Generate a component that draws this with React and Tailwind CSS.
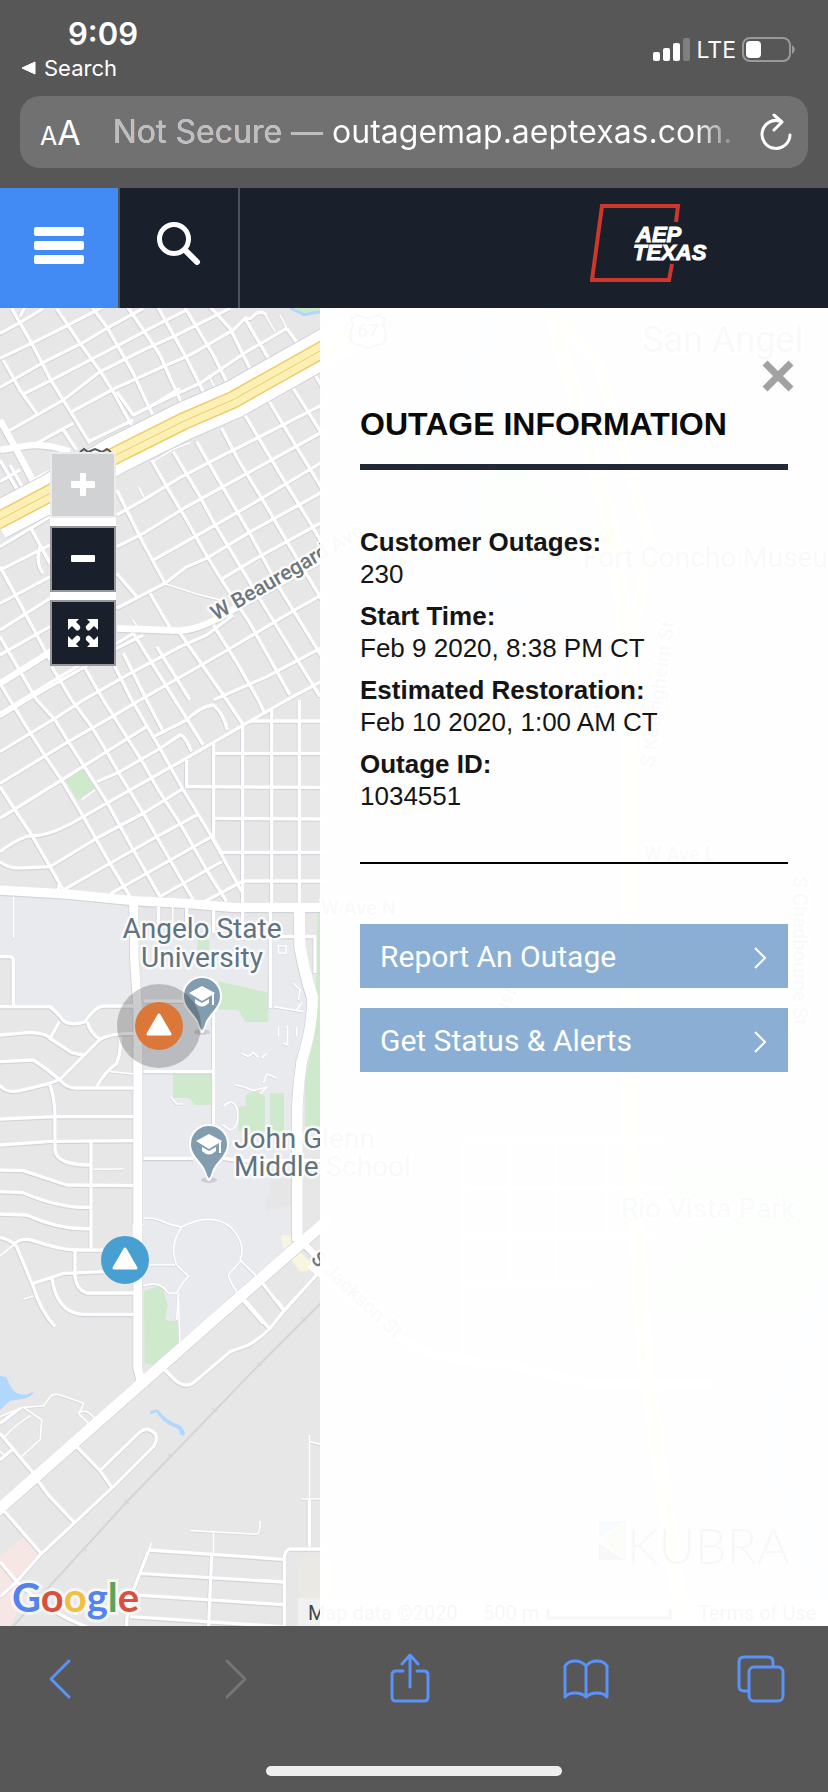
import { useState } from "react";

// Map geometry is kept at three units per pixel. Every district is shifted
// down by its own `y`, so that its paths can start near zero.
const districts = [
  {
    // Downtown grid, both sides of the highway
    y: -24,
    thin: [
      "M840 45L862 90M790 35L825 95M625 225L645 265M415 560L432 592",
      "M490 850L590 882L680 905M398 960L415 985M460 485L515 450L570 428",
    ],
    minor: [
      // Northwest of the highway
      "M35 25L95 130L155 245L215 340L270 430",
      "M75 20L60 50M170 25L240 130L300 212L345 285L400 385",
      "M275 20L320 80L400 220L460 350",
      "M375 10L430 90L480 165L545 310",
      "M470 15L560 175L615 285",
      "M550 15L640 165L680 245",
      "M625 15L690 85L755 215",
      "M735 55L820 200M860 85L900 140M735 55H752Q780 25 800 45",
      "M0 100L65 65L130 25M0 175L95 130L205 75L310 20",
      "M0 262L125 190L245 130L320 85L430 25",
      "M65 285L155 240L270 180L375 125L480 70L560 30",
      "M28 392L190 300L300 215L430 150L530 105L690 25",
      "M215 335L345 265L400 240L500 195L570 165L700 90L740 50",
      "M350 275L400 345L490 300L600 250L740 155L860 85",
      "M265 425L400 360M450 320L540 265",
      "M10 180L60 270L110 340M190 390L230 450M110 430L220 370",
      "M0 480L55 575M30 495L75 575M0 545L60 510",
      // Southeast of the highway
      "M350 570L430 730L495 850M350 820L410 890",
      "M455 480L500 560L560 660L610 750L665 840L750 970L870 1185",
      "M520 455L600 590L640 665L715 790L800 930L960 1190",
      "M590 425L650 530L755 710L830 850L990 1110",
      "M665 385L715 480L800 620L870 740L960 890L990 940",
      "M735 345L845 530L925 660L990 770",
      "M805 300L880 425L990 605M880 265L990 440M945 225L990 300",
      "M350 645L430 600L545 530L660 470L760 420L960 318L990 300",
      "M350 740L430 700L560 620L760 510L960 400L990 385",
      "M460 780L620 690L760 610L960 490L990 475",
      "M350 925L495 850L560 800L620 775L760 690L960 580L990 560",
      "M660 840L760 780L960 670L990 655",
      // South of Beauregard
      "M450 880L520 1000M400 1000L525 1200M470 1040L570 1200M540 1000L680 1200M640 975L712 1090L775 1200",
      "M80 1200L350 1045L430 1005M250 1200L400 1115L540 1040L620 1005L700 945",
      "M420 1200L560 1120L700 1040L850 950L990 870M640 1200L800 1130L990 1030M860 1200L990 1130",
      "M0 1150L30 1200M0 1010L110 1200M155 1100L215 1200M250 1095L310 1200M335 1080L395 1200M370 1060L440 1200",
      // West edge
      "M90 680L150 790M0 740L150 650M0 810L150 735M0 910L150 830",
      "M0 990L150 895M0 1065L150 980M0 800L60 910L150 1080M120 740Q105 790 130 820",
      "M0 1240L180 1130L350 1030L400 1000",
    ],
    major: [
      "M0 360L50 450L100 545M0 450L60 440Q130 425 210 455M100 545L150 518",
      "M350 985L540 992Q590 988 640 962L990 765M0 1150L160 1050",
    ],
  },
  {
    // Diagonal blocks that meet the square ones
    y: 1176,
    thin: [
      "M40 590L40 715M518 620L518 700M245 300L285 270M835 735L835 760L858 760L858 738L835 738M880 850L900 870L895 900",
    ],
    minor: [
      "M0 260L45 330L95 405L150 500L190 570M172 575L180 545",
      "M30 0L92 100L140 175L185 240L250 350L330 490L390 590",
      "M110 0L165 60L205 125L250 195L320 305L400 450L480 590",
      "M215 0L275 80L320 155L360 225L430 340L510 480L580 600",
      "M310 0L345 55L430 190L475 270L540 370L620 510L680 605",
      "M395 0L480 145L550 270L635 410L725 575",
      "M440 0L490 95M525 0L610 135M680 0L730 75M775 0L792 35",
      "M0 50L80 0M0 155L165 55L250 0M0 250L205 125L345 45L420 0",
      "M0 355L185 240L320 155L440 80M290 245L360 215L480 145L540 105Q550 100 575 155",
      "M0 455Q60 410 95 407Q150 410 250 350L390 270L550 180L730 75L860 0",
      "M0 485C30 510 60 505 150 500L290 415L430 340L550 265",
      "M190 570L330 490L470 410L590 345M330 582L440 520L635 410",
      "M480 590L665 485M610 607L725 545M460 110L560 60Q600 20 640 15Q670 40 682 90",
      "M560 180V265M641 130V420L665 457M728 75V610M815 30V610M898 0V610",
      "M750 63H990M641 160H990M560 260L990 262M641 355L990 357M665 457H990M725 543H990",
      "M0 770H30Q40 770 40 785V900M475 620V670M560 620V670M641 630V700M728 630V720M811 630V900M728 710H945V820",
    ],
    major: [],
  },
  {
    // Campus and the streets around it
    y: 2076,
    thin: [
      "M430 655Q460 650 500 670L545 682Q630 635 690 680Q740 730 720 780L770 830M545 682Q505 740 530 795L565 830Q545 850 530 880L505 880Q480 840 430 858",
      "M430 795H525M725 780L685 825Q690 850 720 890M280 508L370 507M330 215L400 222M70 898L100 888M0 768L40 735M535 880L530 960M400 710V675H430",
      "M725 160L745 170L760 158L775 172M785 175L800 160M835 82V110M862 78V135L850 130M890 82V110M820 20L910 35M905 8L890 30",
      "M705 255Q735 260 760 272L800 262L780 282M790 250L800 222L830 235M512 290L530 312H548M670 320Q700 290 712 330Q720 380 690 390L668 375",
    ],
    minor: [
      "M0 20H150Q175 40 190 62Q215 80 255 65Q285 20 310 18H400M40 0V20",
      "M0 105L90 97Q140 100 150 115L215 158L250 165M150 115L178 65M262 65Q270 100 300 118",
      "M0 185L100 180Q140 205 180 240Q200 265 230 264H400",
      "M0 255Q15 280 60 272L150 250L180 238L300 118Q330 100 400 100M290 260Q310 220 350 190Q365 150 360 110",
      "M150 255Q165 300 165 350V450Q170 495 270 495M0 357L165 350H400",
      "M0 435L150 424L400 422M273 425V745M0 510L70 512L200 555L400 557M0 575L70 578Q180 625 270 622M0 642L80 645Q180 690 270 686",
      "M0 712Q35 720 50 740L100 860Q120 930 165 980M40 735Q60 710 100 722Q180 750 230 750H310",
      "M100 850L190 820L310 815M225 750V830Q230 870 260 879H405M155 830Q170 940 250 943H405",
      "M430 215H641M641 0V375M430 475H580M670 475L720 482H990M811 0V25M780 840L850 930M720 890L790 970M990 780L850 935",
      "M430 3H560",
    ],
    major: ["M900 720L990 810"],
  },
  {
    // Rail yard and the southern subdivision
    y: 2976,
    thin: [
      "M535 0L540 130M0 350L70 322L130 318L150 290Q160 280 180 285L250 310Q245 330 235 340L265 370M235 340Q260 320 290 365",
      "M70 322L125 360L120 420L65 470M15 410Q40 380 92 347M570 692L770 703Q780 700 780 663M640 700V765M455 728L445 755M928 405V740M928 425L990 440M905 597H990M0 455L12 465",
    ],
    minor: [
      "M490 205L525 240Q560 270 590 240L690 155L745 135Q780 115 810 85L850 35L890 -10M735 0L805 82M830 0L855 32M0 400L105 525M0 480L35 450",
      "M0 370L60 325M112 540L145 585L225 670M230 440L300 512L335 562M300 512L415 400Q440 375 465 400Q475 420 460 440L340 560L120 765L50 845L0 890",
      "M10 630L125 762M0 785L50 845L120 905Q180 950 270 985M445 755L400 870Q380 920 378 1000M445 750L850 778M420 820L850 846",
      "M410 885L850 914M390 950L850 980M635 765L625 1000M928 600V740M990 747H870Q850 750 853 790V1000",
    ],
    major: [],
  },
];

const arterials = [
  { width: 28, d: "M-10 1746L200 1758L400 1778L560 1786L700 1798L990 1798" },
  { width: 26, d: "M400 1780Q403 1850 403 1950L413 2100V3180L428 3240" },
  { width: 34, d: "M898 1800L900 1916Q915 2000 940 2076" },
  { width: 32, d: "M938 2066Q938 2160 905 2260Q895 2330 892 2400V2800" },
  { width: 34, d: "M990 2730L640 3036L0 3601L-20 3620" },
];

const widths = { thin: 5, minor: 10, major: 20 };

const roads = [
  ...arterials.map((road) => ({ ...road, y: 0 })),
  ...districts.flatMap(({ y, ...classes }) =>
    Object.entries(classes).flatMap(([kind, paths]) =>
      paths.map((d) => ({ d, y, width: widths[kind] }))
    )
  ),
];

const highway =
  "M-10 648L150 564L348 449L400 423L550 348L700 283L990 120L1100 50";

const details = [
  { label: "Customer Outages:", value: "230" },
  { label: "Start Time:", value: "Feb 9 2020, 8:38 PM CT" },
  { label: "Estimated Restoration:", value: "Feb 10 2020, 1:00 AM CT" },
  { label: "Outage ID:", value: "1034551" },
];

function SchoolPin({ x, y }) {
  return (
    <g transform={`translate(${x} ${y})`}>
      <ellipse cx="0" cy="36" rx="8" ry="3" fill="#000" opacity="0.12" />
      <path
        d="M0 37C-2 37-3 34-4 30C-7 20-20 14-20 0A20 20 0 0 1 20 0C20 14 7 20 4 30C3 34 2 37 0 37Z"
        fill="#fff"
      />
      <path
        d="M0 34C-1 34-2 31-3 28C-6 18-18 12-18 0A18 18 0 0 1 18 0C18 12 6 18 3 28C2 31 1 34 0 34Z"
        fill="#839db0"
      />
      <path
        d="M0-10L13-3L12-2V9H10V-1L0 5L-13-3ZM-7 3L0 7L7 3V7Q0 14-7 7Z"
        fill="#fff"
      />
    </g>
  );
}

function OutageMarker({ x, y, fill }) {
  return (
    <g transform={`translate(${x} ${y})`}>
      <circle r="24" fill={fill} />
      <path
        d="M0-11L11 8H-11Z"
        fill="#fff"
        stroke="#fff"
        strokeWidth="3"
        strokeLinejoin="round"
      />
    </g>
  );
}

function OutageMap() {
  return (
    <svg
      className="absolute inset-0 size-full bg-[#e7e7e7]"
      viewBox="0 0 828 1318"
      preserveAspectRatio="xMinYMin slice"
      role="img"
      aria-label="Outage map"
    >
      <g transform="scale(0.33333)">
        {/* Land use */}
        <g fill="#e9eaee">
          <path d="M0 1766L385 1786L400 1800V2076L290 2095L262 2140Q220 2160 180 2140L150 2094H40V1940H0Z" />
          <path d="M425 1890H720V1888H890L945 2076Q930 2200 890 2330V2790L540 3110L495 3035L430 2935Z" />
        </g>
        <path d="M425 1796H720V1885H425Z" fill="#e6e6e9" />
        <path d="M810 2600L890 2610V2690L798 2708V2670L810 2665Z" fill="#e6e6e6" />
        <g fill="#cfe9cc">
          <path d="M195 1416L248 1382L288 1440L232 1476Z" />
          <path d="M592 1894H628V1926H592ZM655 2020L805 2054V2142H735L715 2105H655Z" />
          <path d="M519 2298H636V2391H585L568 2370H519ZM715 2395H737V2362Q765 2340 795 2365V2470H715ZM809 2356H852V2475H809Z" />
          <path d="M953 1816H990V2456H915V2310L945 2180ZM432 2950Q470 2930 487 2940L503 2990L497 3037L535 3040V3108L460 3172L434 3165Z" />
          <path d="M880 0H990V14L915 18Z" />
        </g>
        <path
          d="M870 0L912 20L990 6"
          fill="none"
          stroke="#b0d8ff"
          strokeWidth="9"
        />
        <g fill="#b0d8ff">
          <path d="M0 3203L20 3208Q35 3255 60 3258L80 3260L102 3250Q95 3270 60 3274L30 3278L0 3306Z" />
          <path d="M450 3312Q470 3298 478 3310Q500 3340 540 3352Q560 3370 552 3384L541 3380Q540 3362 520 3356Q490 3345 468 3312L452 3320Z" />
        </g>
        <path
          d="M0 3745L70 3688L115 3740L45 3820L75 3870L30 3954H0Z"
          fill="#f7e7e4"
        />
        <path d="M843 2782H870L880 2800L850 2822ZM868 2850L900 2830L940 2872L920 2890H900Z" fill="#faf5df" />
        <path d="M898 3750H990V3870H893Z" fill="#ebe9e4" />

        {/* Railway */}
        <path
          d="M990 2958L780 3168L380 3582L40 3954"
          fill="none"
          stroke="#d3d5d8"
          strokeWidth="6"
        />
        <path
          d="M904 3028L918 3040M771 3164L785 3174M636 3302L650 3312M504 3438L518 3448M374 3576L388 3588M248 3720L262 3730"
          stroke="#d3d5d8"
          strokeWidth="4"
        />

        {/* Streets: all the edges first, so that crossings stay open */}
        <g fill="none" stroke="#d2d3da" strokeLinejoin="round">
          {roads.map((road, i) => (
            <path
              key={i}
              d={road.d}
              transform={`translate(-1 ${road.y + 2})`}
              strokeWidth={road.width + (road.width > 5 ? 3 : 0)}
            />
          ))}
        </g>
        <g fill="none" stroke="#fff" strokeLinejoin="round">
          {roads.map((road, i) => (
            <path
              key={i}
              d={road.d}
              transform={`translate(0 ${road.y})`}
              strokeWidth={road.width}
            />
          ))}
        </g>

        {/* Highway */}
        <g fill="none" strokeLinejoin="round" transform="translate(0 -8)">
          <path d={highway} stroke="#d2d3da" strokeWidth="118" />
          <path d={highway} stroke="#fff" strokeWidth="112" />
          <path d={highway} stroke="#efcb6c" strokeWidth="54" />
          <path d={highway} stroke="#fcf0b5" strokeWidth="45" />
          <path d={highway} stroke="#efcb6c" strokeWidth="3" />
        </g>

        {/* Far side of town, mostly under the panel */}
        <g fill="none">
          <path d="M1470 0Q1390 300 1405 600T1600 880" stroke="#b0d8ff" strokeWidth="40" />
          <path d="M1650 0L1830 640L1890 1050V2500L1940 3200L2050 3954" stroke="#fcf0b5" strokeWidth="44" />
          <path d="M1660 20L1790 150L1950 700L1890 1050" stroke="#fcf0b5" strokeWidth="30" />
          <path d="M2484 2900L2300 3400L2484 3870" stroke="#b0d8ff" strokeWidth="40" />
          <path d="M930 2870L1200 3090Q1300 3160 1500 3165L1780 3230H2140" stroke="#fff" strokeWidth="24" />
          <path d="M1390 2500H2000M1390 2640H2000M1390 2780H1980M1390 2930H1790M1390 2500V3140M1530 2500V2930M1670 2500V2930M1820 2500V2800" stroke="#fff" strokeWidth="10" />
        </g>
        <path d="M2000 2600H2484V2900L2370 3010H1980V2900L2180 2760V2650H2000Z" fill="#cfe9cc" />
        <path d="M1440 500L1570 440L1700 640L1560 780L1440 720ZM1180 440L1330 420L1300 520Z" fill="#cfe9cc" />
      </g>

      {/* Highway shields, the first one mostly behind the zoom buttons */}
      <path
        d="M80 144L84 141L88 144L95 141L102 144L107 141L111 144"
        fill="none"
        stroke="#555"
        strokeWidth="2"
      />
      <g transform="translate(368 22)">
        <path
          d="M-17-11L-11-15L0-11L11-15L17-11L15-5Q21 8 14 14Q6 15 0 18Q-6 15-14 14Q-21 8-15-5Z"
          fill="#fff"
          stroke="#555"
          strokeWidth="2"
        />
        <text y="7" textAnchor="middle" className="font-['Roboto'] text-[19px]" fill="#333">
          67
        </text>
      </g>

      <SchoolPin x={202} y={688} />
      <SchoolPin x={209} y={836} />

      {/* Place names */}
      <g
        className="font-['Roboto',sans-serif]"
        fill="#5f7380"
        stroke="#fff"
        strokeOpacity="0.8"
        strokeWidth="5"
        strokeLinejoin="round"
        paintOrder="stroke"
      >
        <g className="text-[28px]">
          <text x="202" y="630" textAnchor="middle">Angelo State</text>
          <text x="202" y="659" textAnchor="middle">University</text>
          <text x="234" y="840">John Glenn</text>
          <text x="234" y="868">Middle School</text>
          <text x="583" y="259">Fort Concho Museu</text>
          <text x="621" y="910" fill="#4a9070">Rio Vista Park</text>
        </g>
        <text x="642" y="44" className="text-[36px]">San Angel</text>
        <g className="text-[20px] font-medium" fill="#6b767e">
          <text transform="translate(216 313) rotate(-30)" className="text-[21px]">
            W Beauregard Ave
          </text>
          <text x="644" y="553">W Ave L</text>
          <text x="321" y="607">W Ave N</text>
          <text transform="translate(654 460) rotate(-82)">S Koenigheim St</text>
          <text transform="translate(793 568) rotate(90)">S Chadbourne St</text>
          <text transform="translate(500 720) rotate(-65)">Austin St</text>
          <text transform="translate(310 952) rotate(43)">S Jackson St</text>
        </g>
      </g>

      <circle cx="159" cy="718" r="42" fill="#000" opacity="0.2" />
      <OutageMarker x={159} y={718} fill="#db7839" />
      <OutageMarker x={125} y={952} fill="#489fd2" />

      {/* Credits */}
      <path d="M599 1213H626L599 1230Z" fill="#3ba0e0" />
      <path d="M626 1214V1251L600 1232Z" fill="#c4c858" />
      <path d="M599 1235L624 1252H599Z" fill="#555" />
      <text x="627" y="1256" className="font-['Lato',sans-serif] text-[50px] font-light" fill="#444">
        KUBRA
      </text>
      <rect x="298" y="1290" width="530" height="28" fill="#f5f5f5" opacity="0.7" />
      <g className="font-['Roboto',sans-serif] text-[20px]" fill="#444">
        <text x="308" y="1312">Map data ©2020</text>
        <text x="483" y="1312">500 m</text>
        <text x="698" y="1312">Terms of Use</text>
      </g>
      <path d="M548 1301V1310H670V1301" fill="none" stroke="#444" strokeWidth="3" />
      <text
        x="12"
        y="1304"
        className="font-['Lato',sans-serif] text-[40px] font-bold"
        stroke="#fff"
        strokeOpacity="0.6"
        strokeWidth="6"
        paintOrder="stroke"
      >
        <tspan fill="#5383ec">G</tspan>
        <tspan fill="#d85140">o</tspan>
        <tspan fill="#f1bf42">o</tspan>
        <tspan fill="#5383ec">g</tspan>
        <tspan fill="#58a55c">l</tspan>
        <tspan fill="#d85140">e</tspan>
      </text>
    </svg>
  );
}

function BrowserTop() {
  return (
    <div className="bg-[#575757] px-5 pb-5 font-['Inter',sans-serif] text-white">
      <div className="flex h-24 items-start justify-between">
        <div className="pt-4">
          <div className="pl-12 text-[31px] leading-9 font-semibold">9:09</div>
          <a href="#search" className="flex items-center gap-2 text-[22px] leading-8">
            <svg width="16" height="14" viewBox="0 0 16 14" aria-hidden="true">
              <path d="M15 1V13L2 7Z" fill="#fff" stroke="#fff" strokeWidth="1" strokeLinejoin="round" />
            </svg>
            Search
          </a>
        </div>
        <div className="flex items-center gap-[6px] pt-8 pr-3">
          <svg width="38" height="24" viewBox="0 0 38 24" aria-hidden="true">
            <rect x="0" y="14" width="7" height="9" rx="2" fill="#fff" />
            <rect x="10" y="10" width="7" height="13" rx="2" fill="#fff" />
            <rect x="20" y="5" width="7" height="18" rx="2" fill="#fff" />
            <rect x="30" y="0" width="7" height="23" rx="2" fill="#7f7f7f" />
          </svg>
          <span className="text-[23px] leading-9">LTE</span>
          <svg width="54" height="26" viewBox="0 0 54 26" aria-hidden="true">
            <rect x="1" y="1" width="47" height="23" rx="7" fill="none" stroke="#999" strokeWidth="2" />
            <rect x="4" y="4" width="15" height="17" rx="4" fill="#fff" />
            <path d="M50 8Q53 10 53 12.500T50 17Z" fill="#999" />
          </svg>
        </div>
      </div>
      <div className="flex h-18 items-center rounded-[20px] bg-[#717171] pr-4 pl-5">
        <button aria-label="Page settings" className="flex items-baseline">
          <span className="text-[25px]">A</span>
          <span className="text-[34px]">A</span>
        </button>
        <div className="ml-8 min-w-0 flex-1 overflow-hidden bg-linear-to-r from-white from-93% to-[#717171] bg-clip-text text-[32px] leading-10 whitespace-nowrap text-transparent">
          <span className="text-[#bdbdbd]">Not Secure — </span>
          outagemap.aeptexas.com.
        </div>
        <button aria-label="Reload" className="ml-5">
          <svg width="32" height="38" viewBox="0 0 32 38" fill="none" stroke="#fff" strokeWidth="3" strokeLinecap="round" strokeLinejoin="round">
            <path d="M20 8A14 14 0 1 0 30 22M14 2L22 9L14 17" />
          </svg>
        </button>
      </div>
    </div>
  );
}

function SiteHeader() {
  return (
    <header className="flex h-30 bg-[#19202c]">
      <button
        aria-label="Menu"
        className="flex w-30 items-center justify-center border-r-2 border-[#4d5158] bg-[#428bf5] pb-1"
      >
        <svg width="50" height="38" viewBox="0 0 50 38" fill="#fff" aria-hidden="true">
          <rect width="50" height="9" rx="2" />
          <rect y="14" width="50" height="9" rx="2" />
          <rect y="28" width="50" height="9" rx="2" />
        </svg>
      </button>
      <button
        aria-label="Search"
        className="flex w-30 items-center justify-center border-r-2 border-[#4d5158] pb-2"
      >
        <svg width="46" height="44" viewBox="0 0 46 44" fill="none" stroke="#fff" aria-hidden="true">
          <circle cx="18" cy="17" r="14.500" strokeWidth="5" />
          <path d="M29 28L41 40" strokeWidth="6" strokeLinecap="round" />
        </svg>
      </button>
      <a href="#home" aria-label="AEP Texas" className="mt-4 mr-29 ml-auto">
        <svg width="122" height="80" viewBox="0 0 122 80">
          <path
            d="M86 18L88 2H12L2 76H79L82 60"
            fill="none"
            stroke="#d0372c"
            strokeWidth="4"
          />
          <g
            className="font-['Liberation_Sans',sans-serif] text-[22px] font-bold italic"
            fill="#fff"
            stroke="#fff"
            strokeWidth="1"
          >
            <text x="46" y="38">AEP</text>
            <text x="43" y="56">TEXAS</text>
          </g>
        </svg>
      </a>
    </header>
  );
}

function MapControls() {
  const dark = "border-[#97989b] bg-[#19202c]";
  const light = "border-[#ececec] bg-[#d1d2d3]";
  const base = "flex size-[66px] items-center justify-center border-2";

  return (
    <div className="absolute top-36 left-[50px] flex flex-col gap-2 bg-white">
      <button disabled aria-label="Zoom in" className={`${base} ${light}`}>
        <svg width="24" height="24" viewBox="0 0 24 24" fill="#fff">
          <rect x="9" y="0" width="6" height="23" rx="1" />
          <rect x="0" y="8" width="24" height="7" rx="1" />
        </svg>
      </button>
      <button aria-label="Zoom out" className={`${base} ${dark}`}>
        <svg width="24" height="24" viewBox="0 0 24 24" fill="#fff">
          <rect x="0" y="8" width="24" height="7" rx="1" />
        </svg>
      </button>
      <button aria-label="Full screen" className={`${base} ${dark}`}>
        <svg width="30" height="30" viewBox="0 0 30 30" fill="#fff">
          <path d="M0 1H11L8 4L12 8Q13 10 11 12Q9 13 8 12L4 8L0 12Z" />
          <path d="M30 1H19L22 4L18 8Q17 10 19 12Q21 13 22 12L26 8L30 12Z" />
          <path d="M0 29H11L8 26L12 22Q13 20 11 18Q9 17 8 18L4 22L0 18Z" />
          <path d="M30 29H19L22 26L18 22Q17 20 19 18Q21 17 22 18L26 22L30 18Z" />
        </svg>
      </button>
    </div>
  );
}

function PanelLink({ href, children }) {
  return (
    <a
      href={href}
      className="flex h-16 items-center justify-between bg-[#6493c6]/75 px-5 font-['Roboto',sans-serif] text-[30px] text-white"
    >
      {children}
      <svg width="15" height="26" viewBox="0 0 15 26" fill="none" stroke="#fff" strokeWidth="2" aria-hidden="true">
        <path d="M2 5L12 15L2 25" />
      </svg>
    </a>
  );
}

function OutagePanel({ onClose }) {
  return (
    <section className="absolute inset-y-0 right-0 left-[320px] bg-white/96 px-10 pt-12 font-['Liberation_Sans',Arial,sans-serif] text-[#151515]">
      <div className="flex justify-end">
        <button onClick={onClose} aria-label="Close" className="-mr-[10px] p-1">
          <svg width="32" height="32" viewBox="0 0 32 32" stroke="#a2a2a2" strokeWidth="7">
            <path d="M3 3L29 29M29 3L3 29" />
          </svg>
        </button>
      </div>
      <h1 className="mt-2 border-b-6 border-[#222936] pb-5 text-[32px] leading-10 font-bold text-[#0a0a0a]">
        OUTAGE INFORMATION
      </h1>
      <dl className="mt-14 flex flex-col gap-[10px] border-b-2 border-black pb-[50px] text-[26px] leading-8">
        {details.map(({ label, value }) => (
          <div key={label}>
            <dt className="font-bold">{label}</dt>
            <dd>{value}</dd>
          </div>
        ))}
      </dl>
      <nav className="mt-15 flex flex-col gap-5">
        <PanelLink href="#report">Report An Outage</PanelLink>
        <PanelLink href="#alerts">Get Status &amp; Alerts</PanelLink>
      </nav>
    </section>
  );
}

function ToolbarButton({ label, disabled, children }) {
  return (
    <button
      aria-label={label}
      disabled={disabled}
      className="flex size-15 items-center justify-center text-[#5b92f7] disabled:text-[#757575]"
    >
      <svg
        width="50"
        height="50"
        viewBox="0 0 50 50"
        fill="none"
        stroke="currentColor"
        strokeWidth="3"
        strokeLinecap="round"
        strokeLinejoin="round"
      >
        {children}
      </svg>
    </button>
  );
}

function BrowserToolbar() {
  return (
    <div className="flex h-[166px] flex-col items-center justify-between bg-[#575757] pt-[22px] pb-4">
      <div className="flex w-full justify-between pr-9 pl-[30px]">
        <ToolbarButton label="Back">
          <path d="M34 8L16 26L34 44" />
        </ToolbarButton>
        <ToolbarButton label="Forward" disabled>
          <path d="M16 8L34 26L16 44" />
        </ToolbarButton>
        <ToolbarButton label="Share">
          <path d="M17 18H10Q6 18 6 22V44Q6 48 10 48H38Q42 48 42 44V22Q42 18 38 18H31M24 34V3M16 11L24 2L32 11" />
        </ToolbarButton>
        <ToolbarButton label="Bookmarks">
          <path d="M24 13Q20 8 13 8Q6 8 3 13V44Q6 40 13 40Q20 40 24 44Q28 40 35 40Q42 40 45 44V13Q42 8 35 8Q28 8 24 13V44" />
        </ToolbarButton>
        <ToolbarButton label="Tabs">
          <rect x="12" y="14" width="34" height="34" rx="5" />
          <path d="M11 38H7Q2 38 2 33V9Q2 4 7 4H31Q36 4 36 9V13" />
        </ToolbarButton>
      </div>
      <div className="h-[10px] w-[296px] rounded-full bg-[#eee]" />
    </div>
  );
}

export default function App() {
  const [panelOpen, setPanelOpen] = useState(true);

  return (
    <div className="flex min-h-screen flex-col">
      <BrowserTop />
      <SiteHeader />
      <main className="relative min-h-[900px] flex-1 overflow-hidden">
        <OutageMap />
        <MapControls />
        {panelOpen && <OutagePanel onClose={() => setPanelOpen(false)} />}
      </main>
      <BrowserToolbar />
    </div>
  );
}
